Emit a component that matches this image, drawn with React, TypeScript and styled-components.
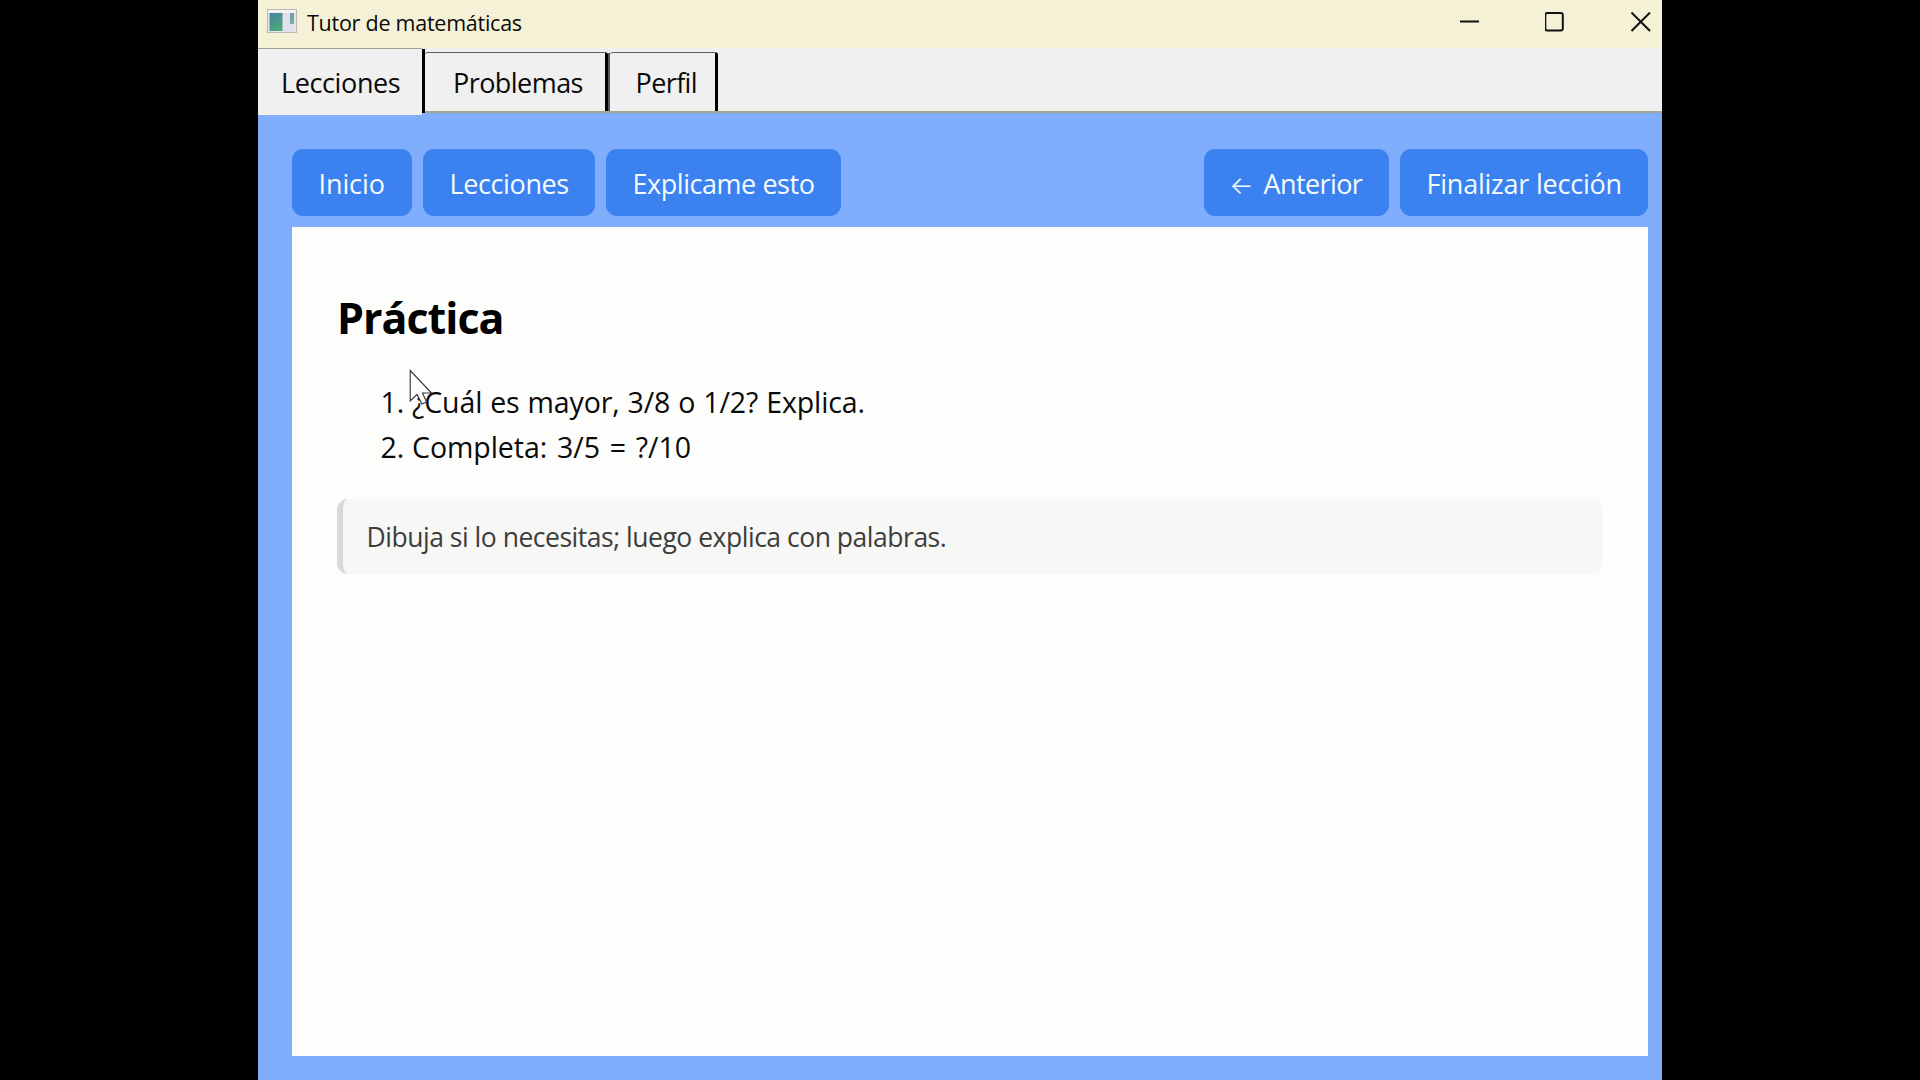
import React from 'react';
import styled, { createGlobalStyle } from 'styled-components';

const GlobalStyle = createGlobalStyle`
  *, *::before, *::after { box-sizing: border-box; }
  html, body { margin: 0; background: #000; overflow: hidden; }
`;

const Stage = styled.div`
  display: flex;
  width: 1920px;
  height: 1080px;
  padding-left: 258px;
  background: #000;
  font-family: "Open Sans", "Noto Sans", sans-serif;
  color: #0a0a0a;
`;

const Window = styled.div`
  display: flex;
  flex-direction: column;
  width: 1404px;
  height: 1080px;
  background: #80aefd;
`;

const TitleBar = styled.header`
  display: flex;
  align-items: flex-start;
  height: 48px;
  flex: none;
  padding-left: 9px;
  background: #f5f1d6;
`;

const AppIcon = styled.svg`
  width: 30px;
  height: 24px;
  margin-top: 9px;
`;

const Title = styled.span<{ $spacing: number }>`
  margin-left: 10px;
  font-size: 21.5px;
  line-height: 46px;
  letter-spacing: ${(p) => p.$spacing}px;
  white-space: nowrap;
`;

const WindowControls = styled.div`
  display: flex;
  gap: 66px;
  margin: 12px 11px 0 auto;
`;

const ControlIcon = styled.svg`
  width: 20px;
  height: 20px;
  fill: none;
  stroke: #111;
  stroke-width: 2;
`;

const TabBar = styled.nav`
  display: flex;
  align-items: flex-start;
  height: 67px;
  flex: none;
  background: linear-gradient(#f0f0f0 63px, #a3a68e 63px, #a3a68e 65px, #80aefd 65px);
`;

const Tab = styled.div<{ $width: number; $inset: number; $spacing: number; $active?: boolean }>`
  width: ${(p) => p.$width}px;
  height: ${(p) => (p.$active ? 67 : 59)}px;
  margin-top: ${(p) => (p.$active ? 0 : 4)}px;
  padding-left: ${(p) => p.$inset}px;
  border-top: ${(p) => (p.$active ? '1.5px solid #a3a191' : '1.5px solid #5c5c60')};
  border-right: ${(p) => (p.$active ? '0' : '3px solid #000')};
  border-radius: ${(p) => (p.$active ? '0' : '3px 3px 0 0')};
  background: #f0f0f0;
  font-size: 27px;
  line-height: ${(p) => (p.$active ? 68 : 60)}px;
  letter-spacing: ${(p) => p.$spacing}px;
  white-space: nowrap;
`;

const TabEdge = styled.div`
  width: 3px;
  height: 64px;
  margin-top: 1px;
  background: #000;
`;

const TabGap = styled.div`
  width: 2px;
  height: 58px;
  margin-top: 5px;
  background: #55555a;
`;

const Page = styled.main`
  display: flex;
  flex-direction: column;
  flex: 1;
  padding: 34px 14px 24px 34px;
`;

const Toolbar = styled.div`
  display: flex;
  gap: 11px;
  height: 67px;
  margin-bottom: 11px;
  flex: none;
`;

const Spacer = styled.div`
  flex: 1;
`;

const Button = styled.button<{ $width: number; $spacing: number }>`
  display: flex;
  flex: none;
  width: ${(p) => p.$width}px;
  height: 67px;
  padding: 0 0 0 26.5px;
  border: 0;
  border-radius: 11px;
  background: #3b82f0;
  color: #f4faff;
  font-family: inherit;
  font-size: 27px;
  line-height: 70px;
  text-align: left;
  letter-spacing: ${(p) => p.$spacing}px;
  white-space: nowrap;
`;

const ArrowGlyph = styled.span`
  width: 33px;
  margin-left: -1px;
  margin-right: 1px;
  font-family: Inter, sans-serif;
  font-size: 25px;
  font-weight: 300;
  line-height: 72px;
  letter-spacing: 0;
`;

const Lesson = styled.section`
  display: flex;
  flex-direction: column;
  flex: 1;
  padding: 0 45px 0 45px;
  background: #fdfdfc;
`;

const Heading = styled.h1`
  margin: 60px 0 0;
  font-size: 43px;
  font-weight: 700;
  line-height: 61px;
  letter-spacing: -1px;
  color: #000;
`;

const Exercises = styled.ol`
  margin: 32px 0 0;
  padding: 0;
  list-style: none;
`;

const Exercise = styled.li<{ $spacing: number; $wordSpacing: number }>`
  display: flex;
  font-size: 28.5px;
  line-height: 45px;
  letter-spacing: ${(p) => p.$spacing}px;
  word-spacing: ${(p) => p.$wordSpacing}px;
  white-space: nowrap;
`;

const Marker = styled.span`
  width: 75px;
  padding-right: 8px;
  text-align: right;
  letter-spacing: -0.2px;
`;

const Note = styled.blockquote`
  margin: 29px 0 0;
  height: 75px;
  padding-left: 23.5px;
  border-left: 6px solid #d9d9d9;
  border-radius: 11px;
  background: #f7f7f6;
  color: #3d3d3b;
  font-size: 26.5px;
  line-height: 76px;
  letter-spacing: -0.48px;
  white-space: nowrap;
`;

const Pointer = styled.svg`
  position: absolute;
  left: 409px;
  top: 369px;
  width: 26px;
  height: 38px;
`;

export default function App() {
  return (
    <Stage>
      <GlobalStyle />
      <Window>
        <TitleBar>
          <AppIcon viewBox="0 0 30 24">
            <defs>
              <linearGradient id="pane" x1="0" y1="0" x2="0.4" y2="1">
                <stop offset="0" stopColor="#4a7f9e" />
                <stop offset="1" stopColor="#4aa87c" />
              </linearGradient>
            </defs>
            <rect x="0.5" y="0.5" width="29" height="23" fill="#e6e6ea" stroke="#b9b8b4" />
            <rect x="1" y="1" width="28" height="2.5" fill="#f5f5f5" />
            <rect x="2.5" y="4" width="13" height="18" fill="url(#pane)" />
            <rect x="16" y="4" width="11" height="18" fill="#e3e0ee" />
            <rect x="23" y="4" width="4" height="11" fill="url(#pane)" opacity="0.75" />
          </AppIcon>
          <Title $spacing={-0.25}>Tutor de matemáticas</Title>
          <WindowControls>
            <ControlIcon viewBox="0 0 20 20"><path d="M1 9.5H20" /></ControlIcon>
            <ControlIcon viewBox="0 0 20 20"><rect x="0.3" y="1" width="17.5" height="17.5" rx="2" /></ControlIcon>
            <ControlIcon viewBox="0 0 20 20"><path d="M0.5 0.5L19 19M19 0.5L0.5 19" /></ControlIcon>
          </WindowControls>
        </TitleBar>
        <TabBar>
          <Tab $active $width={164} $inset={23} $spacing={-0.38}>Lecciones</Tab>
          <TabEdge />
          <Tab $width={183} $inset={28} $spacing={-0.55}>Problemas</Tab>
          <TabGap />
          <Tab $width={108} $inset={25.5} $spacing={-0.6}>Perfil</Tab>
        </TabBar>
        <Page>
          <Toolbar>
            <Button $width={120} $spacing={-0.1}>Inicio</Button>
            <Button $width={172} $spacing={-0.38}>Lecciones</Button>
            <Button $width={235} $spacing={-0.45}>Explicame esto</Button>
            <Spacer />
            <Button $width={185} $spacing={-0.6}><ArrowGlyph>←</ArrowGlyph>Anterior</Button>
            <Button $width={248} $spacing={-0.22}>Finalizar lección</Button>
          </Toolbar>
          <Lesson>
            <Heading>Práctica</Heading>
            <Exercises>
              <Exercise $spacing={-0.1} $wordSpacing={0.65}><Marker>1.</Marker>¿Cuál es mayor, 3/8 o 1/2? Explica.</Exercise>
              <Exercise $spacing={-0.05} $wordSpacing={2.5}><Marker>2.</Marker>Completa: 3/5 = ?/10</Exercise>
            </Exercises>
            <Note>Dibuja si lo necesitas; luego explica con palabras.</Note>
          </Lesson>
        </Page>
      </Window>
      <Pointer viewBox="0 0 26 38">
        <path d="M1.2 1.5V32L8 25.5L13 35L17.5 33L13.5 24H22.5Z" fill="#fdfdfc" stroke="#33333d" strokeWidth="1.1" />
      </Pointer>
    </Stage>
  );
}
